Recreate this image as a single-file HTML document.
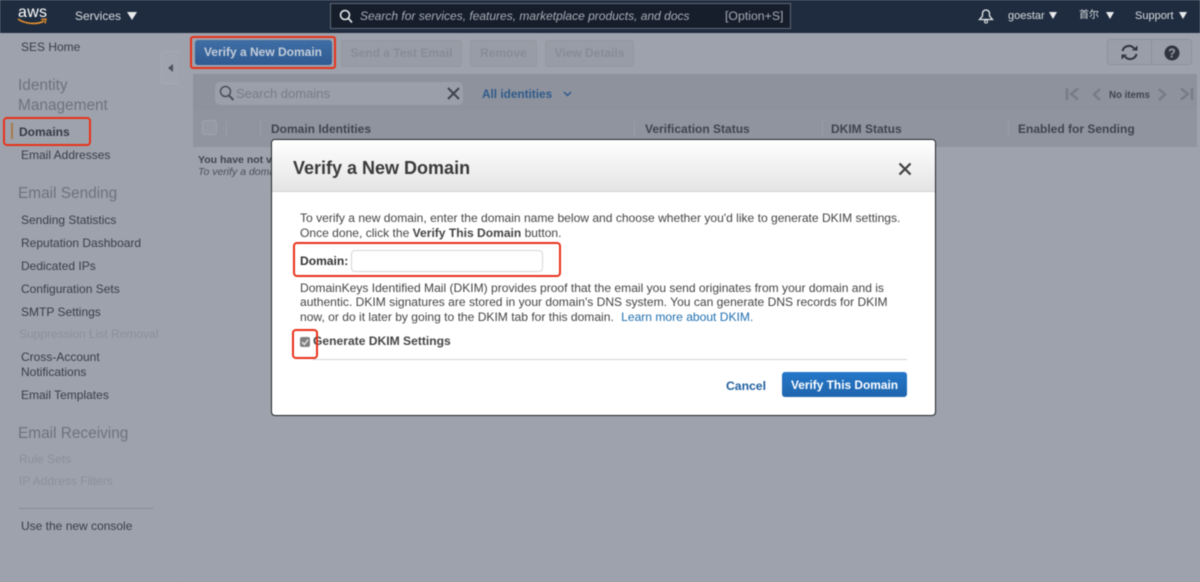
<!DOCTYPE html>
<html style="background:#9ea2ac"><head><meta charset="utf-8">
<style>
html,body{margin:0;padding:0}
body{width:1200px;height:582px;overflow:hidden;position:relative;background:#9ea2ac;font-family:"Liberation Sans","Noto Sans CJK SC",sans-serif}
#w{position:absolute;left:0;top:0;width:1200px;height:582px;overflow:hidden;background:#9ea2ac;filter:blur(.45px)}
.a{position:absolute;white-space:nowrap}
.nav{color:#383d49;font-size:12px;left:21px;line-height:16px}
.dis{color:#8b909b;font-size:12px;left:19px;line-height:16px}
.h{color:#6d727e;font-size:15.4px;left:18px;line-height:20px}
.tri{position:absolute;width:0;height:0;border-left:5px solid transparent;border-right:5px solid transparent;border-top:8px solid #e8eaec}
.top{color:#d9dce0;font-size:11px;line-height:14px}
.btnd{position:absolute;top:40px;height:25px;background:#979ca6;border:1px solid #92979f;border-radius:3px;color:#878c97;font-weight:bold;font-size:12px;line-height:25px;text-align:center;box-sizing:content-box}
.th{color:#3f444f;font-weight:bold;font-size:12px;line-height:14px;top:122px}
.sep{position:absolute;top:120px;width:1px;height:17px;background:#9a9ea8}
.red{position:absolute;border:2px solid #e8321a;box-sizing:border-box;border-radius:4px}
.d{color:#444;font-size:12.07px;line-height:14.5px;left:300px}
</style></head><body><div id="w">
<div class="a" style="left:0;top:0;width:1200px;height:33px;background:#1f2c3f"></div>
<div class="a" style="left:18px;top:4px;color:#fff;font-size:16px;font-weight:normal;line-height:18px;letter-spacing:.3px">aws</div>
<svg class="a" style="left:17px;top:17px" width="31" height="9" viewBox="0 0 31 9"><path d="M1 2C8 7 20 8 27 4" fill="none" stroke="#e8912d" stroke-width="1.6"/><path d="M24 2.5L29 2 28 6.5" fill="none" stroke="#e8912d" stroke-width="1.3"/></svg>
<div class="a top" style="left:75px;top:9px;font-size:12px;line-height:15px">Services</div>
<div class="tri" style="left:127px;top:12px"></div>
<div class="a" style="left:330px;top:3px;width:461px;height:26px;box-sizing:border-box;background:#161e2c;border:1px solid #5f6874"></div>
<svg class="a" style="left:339px;top:9px" width="14" height="15" viewBox="0 0 14 15"><circle cx="6" cy="6" r="4.5" fill="none" stroke="#eef0f2" stroke-width="1.5"/><path d="M9.5 9.5L13 13.5" stroke="#eef0f2" stroke-width="1.7"/></svg>
<div class="a" style="left:360px;top:9px;color:#a9adb4;font-size:12px;font-style:italic;line-height:15px">Search for services, features, marketplace products, and docs</div>
<div class="a" style="left:725px;top:9px;color:#a9adb4;font-size:12.3px;line-height:15px">[Option+S]</div>
<svg class="a" style="left:978px;top:8px" width="16" height="16" viewBox="0 0 16 16"><path d="M1.5 11.5L4.5 8V5.5C4.5 3.5 6 2 8 2S11.5 3.5 11.5 5.5V8L14.5 11.5Z" fill="none" stroke="#e8eaec" stroke-width="1.3"/><circle cx="8" cy="13.5" r="1.5" fill="none" stroke="#e8eaec" stroke-width="1"/></svg>
<div class="a top" style="left:1008px;top:9px">goestar</div>
<div class="tri" style="left:1049px;top:12px;border-width:7px 4px 0"></div>
<div class="a top" style="left:1079px;top:9px;font-size:10px">首尔</div>
<div class="tri" style="left:1106px;top:12px;border-width:7px 4px 0"></div>
<div class="a top" style="left:1135px;top:9px">Support</div>
<div class="tri" style="left:1179px;top:12px;border-width:7px 4px 0"></div>

<div class="a" style="left:178px;top:33px;width:1px;height:549px;background:#a1a5af"></div>
<div class="a nav" style="top:39px">SES Home</div>
<div class="a h" style="top:76px">Identity</div>
<div class="a h" style="top:96px">Management</div>
<div class="a" style="left:11px;top:123px;width:2px;height:16px;background:#a5794a"></div>
<div class="a nav" style="left:19px;top:124px;font-weight:bold;color:#353a46">Domains</div>
<div class="a nav" style="top:147px">Email Addresses</div>
<div class="a h" style="top:184px">Email Sending</div>
<div class="a nav" style="top:212px">Sending Statistics</div>
<div class="a nav" style="top:235px">Reputation Dashboard</div>
<div class="a nav" style="top:258px">Dedicated IPs</div>
<div class="a nav" style="top:281px">Configuration Sets</div>
<div class="a nav" style="top:304px">SMTP Settings</div>
<div class="a dis" style="top:326px">Suppression List Removal</div>
<div class="a nav" style="top:349px">Cross-Account</div>
<div class="a nav" style="top:364px">Notifications</div>
<div class="a nav" style="top:387px">Email Templates</div>
<div class="a h" style="top:424px">Email Receiving</div>
<div class="a dis" style="top:451px">Rule Sets</div>
<div class="a dis" style="top:473px">IP Address Filters</div>
<div class="a" style="left:19px;top:508px;width:134px;height:1px;background:#868b96"></div>
<div class="a nav" style="top:518px">Use the new console</div>
<div class="a" style="left:161px;top:51px;width:18px;height:33px;box-sizing:border-box;background:#a0a4ae;border:1px solid #a6aab3;border-right:0;border-radius:3px 0 0 3px"></div>
<div class="a" style="left:168px;top:64px;width:0;height:0;border-top:4px solid transparent;border-bottom:4px solid transparent;border-right:5px solid #4d525d"></div>

<div class="a" style="left:195px;top:40px;width:137px;height:25px;background:linear-gradient(#3f6ea5,#2f5a92);border-radius:3px;color:#c3cdd9;font-weight:bold;font-size:12px;line-height:25px;text-align:center;text-indent:-1px">Verify a New Domain</div>
<div class="btnd" style="left:341px;width:119px">Send a Test Email</div>
<div class="btnd" style="left:470px;width:65px">Remove</div>
<div class="btnd" style="left:545px;width:87px">View Details</div>
<div class="a" style="left:1107px;top:39px;width:85px;height:26px;box-sizing:border-box;background:#9a9ea8;border:1px solid #8c919b;border-radius:3px"></div>
<div class="a" style="left:1151px;top:39px;width:1px;height:26px;background:#8c919b"></div>
<svg class="a" style="left:1120px;top:44px" width="19" height="17" viewBox="0 0 19 17"><path d="M2.5 7A6.5 6.5 0 0 1 14 4.5" fill="none" stroke="#2f343f" stroke-width="2"/><path d="M16.5 10A6.5 6.5 0 0 1 5 12.5" fill="none" stroke="#2f343f" stroke-width="2"/><path d="M12 6.5H17.5V1.5Z" fill="#2f343f"/><path d="M7 10.5H1.5V15.5Z" fill="#2f343f"/></svg>
<svg class="a" style="left:1164px;top:45px" width="16" height="16" viewBox="0 0 16 16"><circle cx="8" cy="8" r="7.5" fill="#2f343f"/><text x="8" y="12.5" text-anchor="middle" font-size="12.5" font-weight="bold" fill="#9a9ea8" font-family="Liberation Sans">?</text></svg>

<div class="a" style="left:193px;top:74px;width:1004px;height:36px;background:#8d929c"></div>
<div class="a" style="left:193px;top:110px;width:1004px;height:37px;background:#8f949e"></div>
<div class="a" style="left:215px;top:82px;width:248px;height:23px;background:#9b9fa9;border-radius:5px"></div>
<svg class="a" style="left:219px;top:85px" width="16" height="17" viewBox="0 0 16 17"><circle cx="6.5" cy="6.5" r="5" fill="none" stroke="#4a4f5b" stroke-width="1.5"/><path d="M10 10.5L14.5 15" stroke="#4a4f5b" stroke-width="2"/></svg>
<div class="a" style="left:236px;top:86px;color:#777c87;font-size:13px;line-height:16px">Search domains</div>
<svg class="a" style="left:447px;top:87px" width="13" height="13" viewBox="0 0 13 13"><path d="M1 1L12 12M12 1L1 12" stroke="#3e434e" stroke-width="2"/></svg>
<div class="a" style="left:482px;top:86px;color:#2f5a8c;font-size:11.8px;font-weight:bold;line-height:16px">All identities</div>
<svg class="a" style="left:563px;top:91px" width="9" height="6" viewBox="0 0 9 6"><path d="M1 1L4.5 4.5L8 1" fill="none" stroke="#2f5a8c" stroke-width="1.5"/></svg>
<svg class="a" style="left:1065px;top:87px" width="16" height="14" viewBox="0 0 16 14"><path d="M2 1V13" stroke="#777c87" stroke-width="2.5"/><path d="M13 1.5L6 7L13 12.5" fill="none" stroke="#777c87" stroke-width="2.5"/></svg>
<svg class="a" style="left:1092px;top:88px" width="10" height="13" viewBox="0 0 10 13"><path d="M8 1L2 6.5L8 12" fill="none" stroke="#777c87" stroke-width="2.5"/></svg>
<div class="a" style="left:1109px;top:89px;color:#3f444f;font-size:9.7px;font-weight:bold;line-height:13px">No items</div>
<svg class="a" style="left:1157px;top:88px" width="10" height="13" viewBox="0 0 10 13"><path d="M2 1L8 6.5L2 12" fill="none" stroke="#777c87" stroke-width="2.5"/></svg>
<svg class="a" style="left:1178px;top:87px" width="16" height="14" viewBox="0 0 16 14"><path d="M14 1V13" stroke="#777c87" stroke-width="2.5"/><path d="M3 1.5L10 7L3 12.5" fill="none" stroke="#777c87" stroke-width="2.5"/></svg>

<div class="a" style="left:202px;top:120px;width:15px;height:15px;box-sizing:border-box;background:#9599a3;border:1px solid #a0a4ae;border-radius:3px"></div>
<div class="sep" style="left:226px"></div><div class="sep" style="left:260px"></div>
<div class="sep" style="left:634px"></div><div class="sep" style="left:822px"></div><div class="sep" style="left:1008px"></div>
<div class="a th" style="left:271px">Domain Identities</div>
<div class="a th" style="left:645px">Verification Status</div>
<div class="a th" style="left:831px">DKIM Status</div>
<div class="a th" style="left:1018px">Enabled for Sending</div>
<div class="a" style="left:198px;top:154px;color:#3f444f;font-size:10.5px;font-weight:bold;line-height:13px">You have not verified</div>
<div class="a" style="left:198px;top:166px;color:#4a4f5a;font-size:10.5px;font-style:italic;line-height:13px">To verify a domain</div>

<div class="a" style="left:271px;top:139px;width:665px;height:277px;box-sizing:border-box;background:#fff;border:1px solid #1f2328;border-radius:4px;overflow:hidden">
<div style="height:52px;box-sizing:border-box;background:linear-gradient(#fff,#e4e4e4);border-bottom:1px solid #d4d4d4"></div>
</div>
<div class="a" style="left:293px;top:156px;color:#3a3a3a;font-size:18px;font-weight:bold;line-height:24px">Verify a New Domain</div>
<svg class="a" style="left:898px;top:162px" width="14" height="14" viewBox="0 0 14 14"><path d="M1.5 1.5L12.5 12.5M12.5 1.5L1.5 12.5" stroke="#3f3f3f" stroke-width="2.2"/></svg>

<div class="a d" style="top:211px">To verify a new domain, enter the domain name below and choose whether you'd like to generate DKIM settings.</div>
<div class="a d" style="top:226px">Once done, click the <b>Verify This Domain</b> button.</div>
<div class="a d" style="top:254px;font-weight:bold;color:#333">Domain:</div>
<div class="a" style="left:351px;top:250px;width:192px;height:22px;box-sizing:border-box;background:#fff;border:1px solid #d6d6d6;border-radius:4px"></div>
<div class="a d" style="top:281px">DomainKeys Identified Mail (DKIM) provides proof that the email you send originates from your domain and is</div>
<div class="a d" style="top:295px">authentic. DKIM signatures are stored in your domain's DNS system. You can generate DNS records for DKIM</div>
<div class="a d" style="top:310px">now, or do it later by going to the DKIM tab for this domain. <span style="color:#1f6fb0;margin-left:4px">Learn more about DKIM.</span></div>
<div class="a" style="left:300px;top:337px;width:10px;height:10px;background:#808080;border-radius:2px"></div>
<svg class="a" style="left:300px;top:337px" width="10" height="10" viewBox="0 0 10 10"><path d="M2 5L4.3 7.5L8.2 2.5" fill="none" stroke="#e4e4e4" stroke-width="1.4"/></svg>
<div class="a" style="left:313px;top:334px;color:#444;font-size:12.1px;font-weight:bold;line-height:14px">Generate DKIM Settings</div>
<div class="a" style="left:313px;top:359px;width:594px;height:1px;background:#d4d4d4"></div>
<div class="a" style="left:726px;top:379px;color:#1f5f9f;font-size:12.2px;font-weight:bold;line-height:15px">Cancel</div>
<div class="a" style="left:782px;top:372px;width:125px;height:25px;background:linear-gradient(#2477c9,#1f65ad);border-radius:3px;color:#fff;font-size:11.9px;font-weight:bold;line-height:26px;text-align:center">Verify This Domain</div>

<div class="red" style="left:190px;top:36px;width:146px;height:33px;border-radius:3px"></div>
<div class="red" style="left:3px;top:117px;width:88px;height:29px"></div>
<div class="red" style="left:293px;top:242px;width:268px;height:35px"></div>
<div class="red" style="left:292px;top:329px;width:26px;height:30px"></div>
</div></body></html>
